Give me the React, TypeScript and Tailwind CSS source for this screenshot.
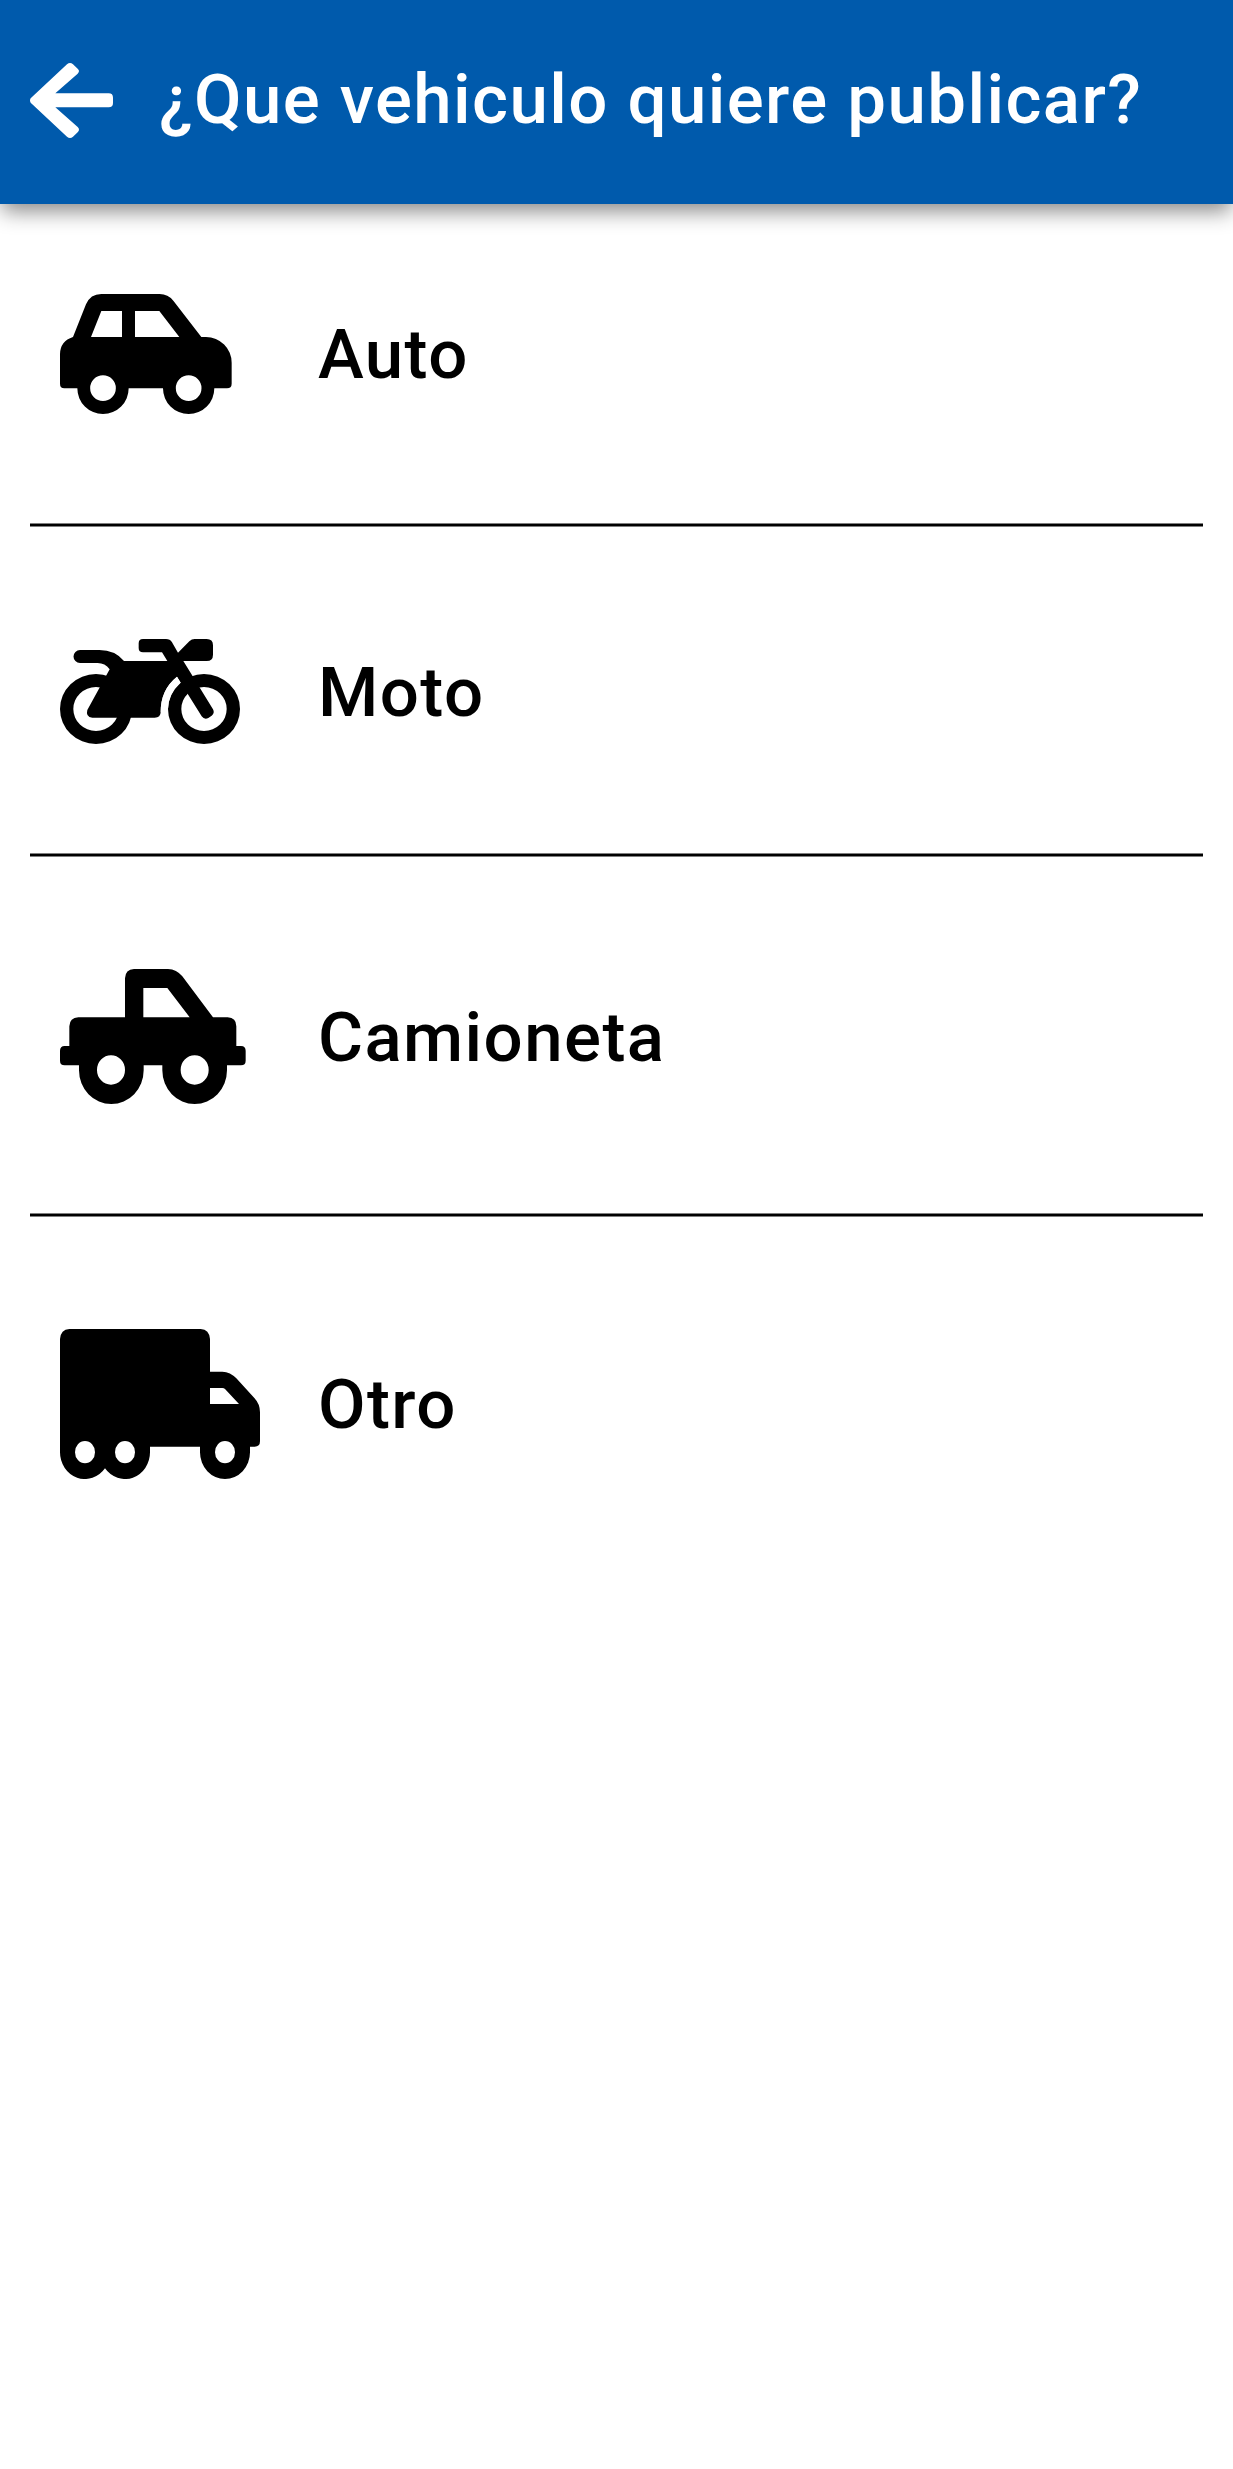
import type { ReactNode } from 'react';

function ArrowLeft() {
  return (
    <svg viewBox="90 69 249 225" className="h-[75px] w-[83px] shrink-0" fill="#fff">
      <path d="M92 175 L201 73 Q210 65 219 73 L233 86 Q241 93 233 101 L166 160 L326 160 Q339 160 339 173 L339 189 Q339 202 326 202 L166 202 L233 261 Q241 269 233 277 L219 290 Q210 298 201 290 L92 188 Q88 181 92 175 Z" />
    </svg>
  );
}

function CarIcon() {
  return (
    <svg viewBox="60 72 515 360" className="h-[120px] w-[171.67px]" fillRule="evenodd">
      <path d="M184 72 H359 Q384 72 400 92 L484 201 H498 A77 77 0 0 1 575 278 V341 Q575 355 561 355 H523 A77 77 0 0 1 369 355 H266 A77 77 0 0 1 112 355 H73 Q60 355 60 341 V252 Q61 213 99 201 L138 103 Q151 72 184 72 Z M184 123 L153 201 H246 V123 Z M285 123 V201 H418 L358 123 Z M189 316 A38.5 38.5 0 1 0 189 393 A38.5 38.5 0 1 0 189 316 Z M446 316 A38.5 38.5 0 1 0 446 393 A38.5 38.5 0 1 0 446 316 Z" />
    </svg>
  );
}

function MotorcycleIcon() {
  return (
    <svg viewBox="60 57 540 315" className="h-[105px] w-[180px]" fillRule="evenodd">
      <path d="M168 162 A108 105 0 1 0 168 372 A108 105 0 1 0 168 162 Z M168 201 A68 66 0 1 0 168 333 A68 66 0 1 0 168 201 Z" />
      <path d="M492 162 A108 105 0 1 0 492 372 A108 105 0 1 0 492 162 Z M492 201 A68 66 0 1 0 492 333 A68 66 0 1 0 492 201 Z" />
      <path d="M252 123 H382 L366 97 H309 Q296 97 296 84 V70 Q296 57 309 57 H378 Q390 57 396 67 L414 98 L448 64 Q455 57 464 57 H500 Q519 57 519 76 V104 Q519 123 500 123 H430 L519 268 Q525 279 515 287 L505 294 Q493 300 485 289 L411 170 Q362 209 362 276 Q362 293 344 293 H157 Q136 291 142 270 L209 148 Q195 129 173 129 H120 A19.5 19.5 0 0 1 120 90 H178 Q225 90 252 123 Z" />
      <path d="M411 170 Q362 209 362 276 L384 267 Q385 222 422 188 Z" fill="#fff" />
    </svg>
  );
}

function PickupIcon() {
  return (
    <svg viewBox="60 57 557 405" className="h-[135px] w-[185.67px]" fillRule="evenodd">
      <path d="M282 57 H384 Q410 58 427 79 L519 202 H563 Q589 203 589 229 V288 H603 Q617 288 617 302 V332 Q617 346 603 346 H561 V361 A97 101 0 0 1 367 361 V346 H311 V361 A97 101 0 0 1 117 361 V346 H74 Q60 346 60 332 V302 Q60 288 74 288 H88 V229 Q89 203 115 202 H255 V85 Q256 58 282 57 Z M310 114 V202 H449 L382 114 Z M213 316 A42 44 0 1 0 213 404 A42 44 0 1 0 213 316 Z M464 316 A42 44 0 1 0 464 404 A42 44 0 1 0 464 316 Z" />
    </svg>
  );
}

function TruckIcon() {
  return (
    <svg viewBox="60 57 600 450" className="h-[150px] w-[200px]" fillRule="evenodd">
      <path d="M88 57 H482 Q508 59 510 87 V185 H547 Q571 186 589 205 L643 264 Q660 282 660 307 V394 Q660 410 644 410 H630 V427 A75 80 0 0 1 480 427 V410 H330 V427 A75 80 0 0 1 195 475 A75 80 0 0 1 60 427 V87 Q62 59 88 57 Z M510 234 V282 H597 L555 237 Q552 234 547 234 Z M135 393 A30 33.5 0 1 0 135 460 A30 33.5 0 1 0 135 393 Z M255 393 A30 33.5 0 1 0 255 460 A30 33.5 0 1 0 255 393 Z M555 393 A30 33.5 0 1 0 555 460 A30 33.5 0 1 0 555 393 Z" />
    </svg>
  );
}

const vehicles: { label: string; icon: ReactNode; spacing: string; labelSpacing: string }[] = [
  { label: 'Auto', icon: <CarIcon />, spacing: 'pt-[90px] pb-[109px]', labelSpacing: 'pt-0' },
  { label: 'Moto', icon: <MotorcycleIcon />, spacing: 'pt-[112px] pb-[109px]', labelSpacing: 'pt-[2px]' },
  { label: 'Camioneta', icon: <PickupIcon />, spacing: 'pt-[112px] pb-[109px]', labelSpacing: 'pt-[2px]' },
  { label: 'Otro', icon: <TruckIcon />, spacing: 'pt-[112px] pb-[109px]', labelSpacing: 'pt-0' },
];

export default function App() {
  return (
    <div className="min-h-[2469px] w-full bg-white font-['Roboto',sans-serif] text-[69px] leading-none font-medium tracking-[1.42px] text-black">
      <header className="flex h-[204px] items-center gap-[46px] bg-[#005aac] px-[30px] pb-[3px] text-white shadow-[0_9px_20px_-2px_rgba(0,0,0,0.47)]">
        <ArrowLeft />
        <h1 className="pb-[2px] whitespace-nowrap">¿Que vehiculo quiere publicar?</h1>
      </header>
      <ul className="px-[30px]">
        {vehicles.map(({ label, icon, spacing, labelSpacing }, i) => (
          <li key={label}>
            {i > 0 && <div className="h-1 border-y border-[#7f7f7f] bg-black" />}
            <button className={`flex w-full items-center px-[30px] text-left ${spacing}`}>
              <span className="w-[258px] shrink-0">{icon}</span>
              <span className={labelSpacing}>{label}</span>
            </button>
          </li>
        ))}
      </ul>
    </div>
  );
}
